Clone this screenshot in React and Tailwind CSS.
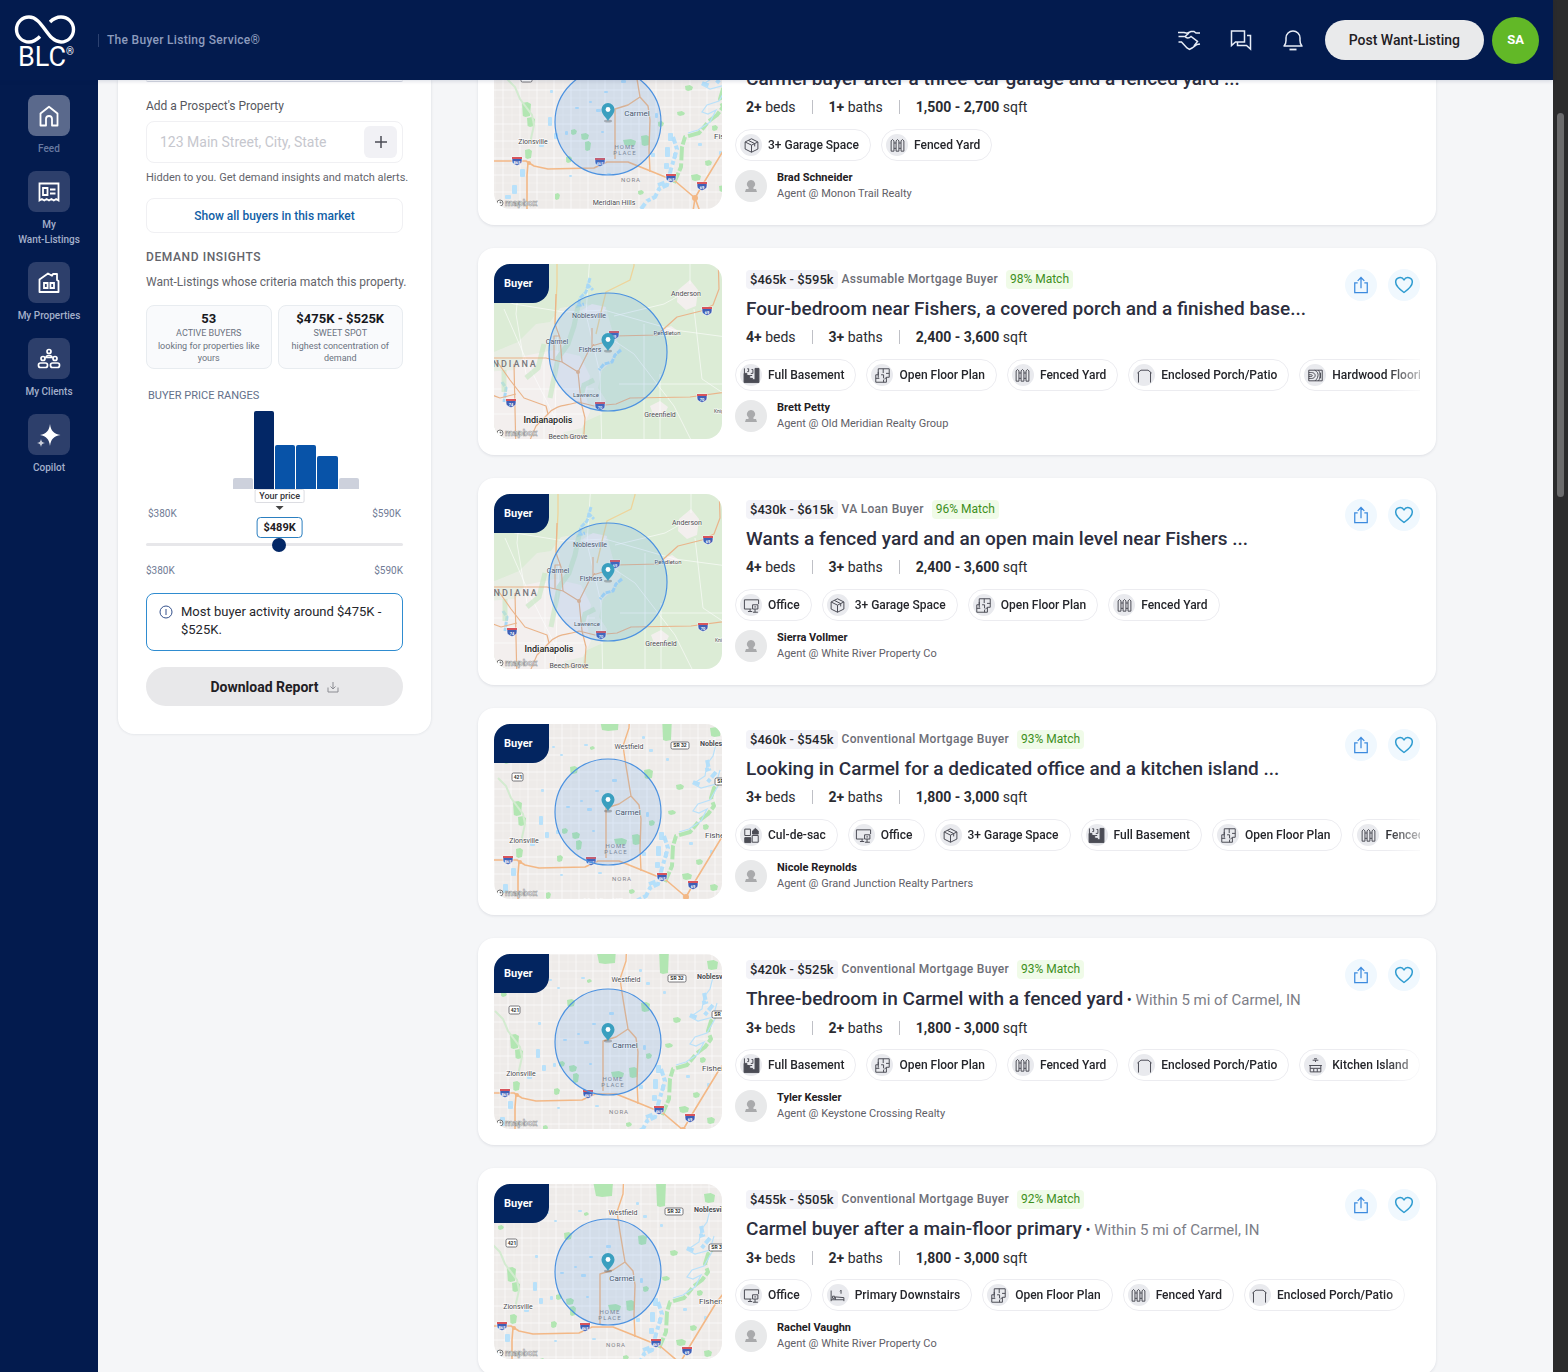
import { useState } from "react";

const listings = [
  {
    title: "Carmel buyer after a three-car garage and a fenced yard ...",
    price: "$400k - $495k",
    type: "Conventional Mortgage Buyer",
    match: "99% Match",
    beds: "2+",
    baths: "1+",
    sqft: "1,500 - 2,700",
    features: ["3+ Garage Space", "Fenced Yard"],
    agent: "Brad Schneider",
    company: "Monon Trail Realty",
    map: "carmel",
    shift: [9, -9],
  },
  {
    title: "Four-bedroom near Fishers, a covered porch and a finished base...",
    price: "$465k - $595k",
    type: "Assumable Mortgage Buyer",
    match: "98% Match",
    beds: "4+",
    baths: "3+",
    sqft: "2,400 - 3,600",
    features: ["Full Basement", "Open Floor Plan", "Fenced Yard", "Enclosed Porch/Patio", "Hardwood Flooring"],
    agent: "Brett Petty",
    company: "Old Meridian Realty Group",
    map: "fishers",
    shift: [0, 0],
  },
  {
    title: "Wants a fenced yard and an open main level near Fishers ...",
    price: "$430k - $615k",
    type: "VA Loan Buyer",
    match: "96% Match",
    beds: "4+",
    baths: "3+",
    sqft: "2,400 - 3,600",
    features: ["Office", "3+ Garage Space", "Open Floor Plan", "Fenced Yard"],
    agent: "Sierra Vollmer",
    company: "White River Property Co",
    map: "fishers",
    shift: [1, -1],
  },
  {
    title: "Looking in Carmel for a dedicated office and a kitchen island ...",
    price: "$460k - $545k",
    type: "Conventional Mortgage Buyer",
    match: "93% Match",
    beds: "3+",
    baths: "2+",
    sqft: "1,800 - 3,000",
    features: ["Cul-de-sac", "Office", "3+ Garage Space", "Full Basement", "Open Floor Plan", "Fenced Yard"],
    agent: "Nicole Reynolds",
    company: "Grand Junction Realty Partners",
    map: "carmel",
    shift: [0, 0],
  },
  {
    title: "Three-bedroom in Carmel with a fenced yard",
    area: "Within 5 mi of Carmel, IN",
    price: "$420k - $525k",
    type: "Conventional Mortgage Buyer",
    match: "93% Match",
    beds: "3+",
    baths: "2+",
    sqft: "1,800 - 3,000",
    features: ["Full Basement", "Open Floor Plan", "Fenced Yard", "Enclosed Porch/Patio", "Kitchen Island"],
    agent: "Tyler Kessler",
    company: "Keystone Crossing Realty",
    map: "carmel",
    shift: [-3, 3],
  },
  {
    title: "Carmel buyer after a main-floor primary",
    area: "Within 5 mi of Carmel, IN",
    price: "$455k - $505k",
    type: "Conventional Mortgage Buyer",
    match: "92% Match",
    beds: "3+",
    baths: "2+",
    sqft: "1,800 - 3,000",
    features: ["Office", "Primary Downstairs", "Open Floor Plan", "Fenced Yard", "Enclosed Porch/Patio"],
    agent: "Rachel Vaughn",
    company: "White River Property Co",
    map: "carmel",
    shift: [-6, 6],
  },
];

const priceBars = [
  { h: 0 }, { h: 0 }, { h: 0 }, { h: 0 },
  { h: 11, color: "bg-[#cdd1dc]" },
  { h: 78, color: "bg-[#032766]" },
  { h: 44, color: "bg-[#0853a8]" },
  { h: 44, color: "bg-[#0853a8]" },
  { h: 33, color: "bg-[#0853a8]" },
  { h: 11, color: "bg-[#cdd1dc]" },
  { h: 0 }, { h: 0 },
];

/* ---------- icons ---------- */

function Stroke({ size = 22, width = 1.5, children }) {
  return (
    <svg width={size} height={size} viewBox="0 0 24 24" fill="none" stroke="currentColor" strokeWidth={width} aria-hidden="true">
      {children}
    </svg>
  );
}

const HomeIcon = () => (
  <Stroke size={24} width={1.8}>
    <path d="M3.500 21.500V9.500L12 2.800l8.500 6.700v12H15v-6.500a3 3 0 0 0-6 0v6.500z" strokeLinejoin="round" />
  </Stroke>
);

const WantListIcon = () => (
  <Stroke size={24} width={1.8}>
    <path d="M2.500 3.500h19v17l-2.400-1.500-2.300 1.500-2.400-1.500-2.400 1.500-2.400-1.500-2.300 1.500-2.400-1.500-2.400 1.500z" />
    <path d="M6 8h4.500v7H6zM13 9.500h5.500M13 13.500h5.500" />
  </Stroke>
);

const PropertiesIcon = () => (
  <Stroke size={24} width={1.8}>
    <path d="M2.500 21V8.500L11 2.500l4 2.200 1-1.700h4V9l1.500 1v11z" strokeLinejoin="round" />
    <path d="M7 12h3.600v5H7zM13.400 12H17v5h-3.600z" />
  </Stroke>
);

const ClientsIcon = () => (
  <Stroke size={24} width={1.7}>
    <circle cx="12" cy="4.500" r="2" />
    <circle cx="6" cy="11.500" r="2" />
    <circle cx="18" cy="11.500" r="2" />
    <path d="M9 10.500c0-1.200 1.200-2 3-2s3 .8 3 2z" />
    <rect x="1.500" y="16" width="9" height="4.500" rx="2" />
    <rect x="13.500" y="16" width="9" height="4.500" rx="2" />
  </Stroke>
);

const CopilotIcon = () => (
  <svg width="24" height="24" viewBox="0 0 24 24" fill="currentColor" aria-hidden="true">
    <path d="M13 1c1 7 3.500 9.500 10.500 11C16.500 13.500 14 16 13 23c-1-7-3.500-9.500-10-11C9.500 10.500 12 8 13 1z" />
    <path d="M4 16c.4 2.400 1.200 3.400 4 4-2.800.6-3.600 1.600-4 4-.4-2.400-1.200-3.400-4-4 2.800-.6 3.600-1.600 4-4z" opacity=".75" />
  </svg>
);

const HandshakeIcon = () => (
  <Stroke size={24} width={1.5}>
    <path d="M1 4.500h6l3 .8 4-1.800h3l2 1.500h4" />
    <path d="M1.500 14h3l5.500 6 2.500 1.500L15 20l5-3.500 3-.5" />
    <path d="M1.500 8.500H8L12 5M8 8.500c1.500 2 4 1.800 6 0l6.500 5-3.500 4.500" />
  </Stroke>
);

const ChatsIcon = () => (
  <Stroke size={24} width={1.5}>
    <path d="M2.500 3h13v11H6.500l-4 3.500z" />
    <path d="M18 7.500h3.500v13.500l-4-3.500h-9V14" />
  </Stroke>
);

const BellIcon = () => (
  <Stroke size={24} width={1.5}>
    <path d="M3 18c1.600-1.300 2-3 2-5.500V10a7 7 0 0 1 14 0v2.500c0 2.500.4 4.200 2 5.500z" strokeLinejoin="round" />
    <path d="M8.500 21.500h7" strokeWidth="1.800" />
  </Stroke>
);

const ShareIcon = () => (
  <Stroke size={20} width={1.5}>
    <path d="M8 9.500H4.500V21h15V9.500H16M12 16V3M8 7l4-4 4 4" />
  </Stroke>
);

const HeartIcon = () => (
  <Stroke size={20} width={1.8}>
    <path d="M12 21C7 17.500 2 13.500 2 8.500A5.300 5.300 0 0 1 12 6a5.300 5.300 0 0 1 10 2.500c0 5-5 9-10 12.500z" strokeLinejoin="round" />
  </Stroke>
);

const featureIcons = {
  "3+ Garage Space": (
    <path d="M12 2.500l9 4.500v10l-9 4.500L3 17V7zM3 7l9 4.500L21 7M12 11.500v10M7.500 4.800l9 4.500v4" />
  ),
  "Fenced Yard": (
    <path d="M3 5.500L5 3.500l2 2V20H3zM10 5.500l2-2 2 2V20h-4zM17 5.500l2-2 2 2V20h-4zM7 8.500h3M7 16h3M14 8.500h3M14 16h3" />
  ),
  "Full Basement": (
    <g>
      <path d="M1.500 9h4v3h4v4h4v2h3.500V2h5.500v20h-21z" fill="currentColor" />
      <path d="M2 9V2M6 2.500h2v4H6M12 3.500h2V9h-3M10 12h3" />
    </g>
  ),
  "Open Floor Plan": (
    <path d="M6 2.500h15.500v12h-4v7H2.500V11H6zM6 7v8M2.500 16h5M13 2.500v6M10 11h3.500v5M17 9h4.500M13.500 21.500V18M17.500 14.500l-3 3" />
  ),
  "Enclosed Porch/Patio": <path d="M3.500 22V7.500M20.500 22V7.500M2 8.500l5-4h10l5 4" />,
  "Hardwood Flooring": (
    <path d="M2.500 4.500h19v15h-19zM2.500 8c6-1 9 1 9 4s-3 5-9 4M2.500 11c3-.4 5 0 5 1.200s-2 1.500-5 1.200M11 4.500c4 2 5 5 4.500 8s-2 5-4 7M16 4.500c3 3 3.500 11 0 15M19 8v8" />
  ),
  Office: (
    <path d="M12 17H2V4h20v6M7 20.500h6M10 17v3.500M13.500 11h7.500v6h-7.500zM17 17v4.500M14 21.500h7M16 14h2.500" />
  ),
  "Cul-de-sac": (
    <g>
      <path d="M2.500 3h8v9h-8zM13 12h8.500v9.500H13z" />
      <path d="M13.500 5.500l4-3.500 4 3.500V10h-8zM2.500 15h8.500v7H2.500z" fill="currentColor" />
    </g>
  ),
  "Kitchen Island": (
    <path d="M3 12h18M4.500 12v9h15v-9M9.500 21v-5h5v5M4.500 16h5M14.500 16h5M8 4.500h8M10 2.500h4M12 4.500V7" />
  ),
  "Primary Downstairs": (
    <path d="M3 5v15M3 18h18M21 20v-5l-12-1v4M5 13h3v3H5zM17 4.500v5M15.500 6L17 4.500" />
  ),
};

/* ---------- maps ---------- */

function Shield({ x, y, label }) {
  return (
    <g transform={`translate(${x} ${y})`}>
      <path d="M-5-4h10v4c0 2.500-2 3.500-5 4.500C-3 3.500-5 2.500-5 0z" fill="#3f5fb5" stroke="#fff" strokeWidth=".6" />
      <path d="M-5-4h10v2H-5z" fill="#d8545c" />
      <text y="2.500" fontSize="4" fill="#fff" textAnchor="middle" fontWeight="700">{label}</text>
    </g>
  );
}

const parks = [
  [105, -10, 20, 16], [168, -10, 10, 26], [216, 3, 11, 9], [76, 42, 8, 7], [150, 45, 9, 9],
  [19, 77, 9, 14], [24, 92, 8, 9], [22, 124, 7, 9], [63, 131, 6, 6], [68, 104, 6, 5],
  [78, 108, 8, 6], [82, 116, 6, 9], [120, 114, 13, 6], [138, 110, 9, 10], [155, 96, 6, 5],
  [188, 149, 10, 6], [182, 60, 8, 5], [174, 86, 8, 4], [202, 135, 7, 5], [209, 100, 6, 5],
  [96, 22, 5, 3], [10, 35, 6, 4], [216, 160, 8, 6], [52, 168, 5, 6], [135, 165, 6, 4],
];

const ponds = [
  [45, 92, 4, 9], [58, 22, 3, 2], [90, 20, 4, 2], [66, 30, 3, 2], [118, 55, 5, 3], [101, 66, 4, 2],
  [72, 82, 4, 2], [93, 84, 5, 3], [86, 76, 3, 2], [51, 108, 4, 6], [62, 106, 3, 4], [98, 106, 3, 2],
  [155, 25, 4, 3], [148, 12, 3, 3], [172, 34, 3, 3], [152, 88, 3, 5], [165, 108, 5, 8], [162, 122, 5, 10],
  [170, 128, 4, 5], [161, 138, 5, 6], [17, 144, 5, 8], [9, 160, 5, 9], [2, 170, 6, 4], [36, 119, 5, 3],
  [104, 148, 4, 2], [66, 150, 3, 2], [148, 128, 4, 4], [195, 118, 4, 3], [216, 126, 3, 4], [47, 65, 3, 3],
];

function CarmelMap() {
  const lines = [];
  for (let i = -1; i < 15; i++) lines.push(i * 17);
  return (
    <g>
      <rect x="-20" y="-20" width="270" height="220" fill="#eeebe9" />
      <g stroke="#fff" strokeWidth=".5" opacity=".5">
        {lines.map((n) => (
          <path key={n} d={`M${n + 9}-20V200M-20 ${n + 5}H250`} />
        ))}
      </g>
      <g stroke="#fff" strokeWidth=".8" opacity=".8">
        {lines.map((n) => (
          <path key={n} d={`M${n}-20V200M-20 ${n - 3}H250`} />
        ))}
      </g>
      <g fill="#b2e6b2">
        {parks.map(([x, y, w, h]) => (
          <path key={`${x}-${y}`} d={`M${x} ${y + 1}l${w * 0.6}-1 ${w * 0.4} 2-1 ${h - 2}-${w * 0.5} 1-${w * 0.3}-1z`} />
        ))}
      </g>
      <g fill="#b9e1fa">
        {ponds.map(([x, y, w, h]) => (
          <rect key={`${x}-${y}`} x={x} y={y} width={w} height={h} rx="1" />
        ))}
      </g>
      <path d="M4 54l8 8 5 12 12 16 2 10-4 18" fill="none" stroke="#d3ebd0" strokeWidth="2" />
      <path d="M228 55l-8 9-3 10 3 8-6 8-8 6-10 12-14 4-3 10-1 20-7 16" fill="none" stroke="#b2e6b2" strokeWidth="4" strokeDasharray="8 2 14 3" strokeLinejoin="round" />
      <path d="M222 20l-3 12-6 8-2 12-12 8 8 4 15-4 4-14M224 62l-8 14-12 4-5 7 6 2 8-4-6 12-12 8-10 3" fill="none" stroke="#b9e1fa" strokeWidth="1.200" />
      <path d="M213 36l2 9-6 2M222 48l-10 12M199 58l8 3M170 112l4 12-6 20-4 16-8 4-4 8-8 4-6 8M155 160l8-3" fill="none" stroke="#b4dffa" strokeWidth="4" strokeDasharray="7 2 4 3" />
      <g fill="none" stroke="#f3b886" strokeWidth="1.400" strokeLinejoin="round">
        <path d="M136-20L135 4l-6 18 3 20 5 30-12 8-13 4v50M137 72l8 9 2 14-1 30 1 22" />
        <path d="M-20 136h43l8 5 14 3 46-1 13-6h21l25 10 22 9 20 17 8 22M25 138l-1 12v50M250 85l-22 28-28 46-8 14-4 27" strokeWidth="1.600" />
      </g>
      <circle cx="192" cy="173" r="3" fill="#f3b886" />
      <circle cx="26" cy="138" r="2" fill="#f3b886" />
      <g fontSize="7" fill="#4a4a4e" stroke="#fff" strokeWidth="1.200" paintOrder="stroke" textAnchor="middle">
        <text x="135" y="25">Westfield</text>
        <text x="206" y="22" textAnchor="start" fontWeight="700">Noblesville</text>
        <text x="134" y="91" fontSize="8">Carmel</text>
        <text x="211" y="114" fontSize="8" textAnchor="start">Fishers</text>
        <text x="30" y="119">Zionsville</text>
        <text x="111" y="180">Meridian Hills</text>
      </g>
      <g fontSize="6" fill="#85858c" textAnchor="middle" letterSpacing="1">
        <text x="122" y="124">HOME</text>
        <text x="122" y="130">PLACE</text>
        <text x="128" y="157">NORA</text>
      </g>
      <g fill="#fff" stroke="#55555a" strokeWidth=".8">
        <rect x="177" y="18" width="18" height="7" rx="1.500" />
        <rect x="18" y="49" width="11" height="8" rx="1.500" />
        <rect x="221" y="54" width="18" height="7" rx="1.500" />
      </g>
      <g fontSize="5" fontWeight="700" fill="#333" textAnchor="middle">
        <text x="186" y="23">SR 32</text>
        <text x="24" y="55">421</text>
        <text x="230" y="59">SR 37</text>
      </g>
      <Shield x={14} y={136} label="865" />
      <Shield x={97} y={137} label="465" />
      <Shield x={168} y={153} label="465" />
      <Shield x={199} y={161} label="69" />
    </g>
  );
}

function FishersMap() {
  return (
    <g>
      <rect x="-10" y="-10" width="250" height="200" fill="#dcecd6" />
      <g fill="#f3efee">
        <path d="M-10 92l34-14 18-18 14-2 10-14 24-4 22 4 6 22 8 16-6 14-12 10-4 18 8 12-4 14-18 8-4 22H-10z" opacity=".55" />
        <path d="M-10 108l30-2 10-14 30-6 26 6 10 20-4 20 4 16-8 16-18 4-8 12H-10z" />
        <path d="M184 26l12-10 8 10-2 16-10 4-9-8zM156 142l10-5 8 6-4 8-11-1zM88 46l10-6 14 3-3 9-14 4zM168 66l9-4 7 5-6 5z" />
      </g>
      <g fill="none" stroke="#fff" strokeWidth="1" opacity=".6">
        <path d="M-10 30l30 10 50 8 40-2 70 20 60 8M28-10l-6 60 10 60M96-10l-4 60 14 60 2 80M150 60v130M196-10v30M200 45l8 70 30 20M120 52l50-12 18-10M110 70l30 20 40 52 20 40M125 120h105M10 45l24 55 30 60M50 90v90M-10 125h110M-10 150h100M166 110v80M64 60l-4 120" />
      </g>
      <path d="M96 14l-4 14-6 6-2 8 6-2M93 20l6 6M8 118l4 6-2 14M127 86l-6 5-3 7-8 2-5 6" fill="none" stroke="#a8d8f5" strokeWidth="3" strokeDasharray="5 1" />
      <path d="M84 42l-4 20-6 18-10 14-8 40M100 116l-10 5-3 12M50 80l-6 24-12 10M10 106v22" fill="none" stroke="#c4e6c2" strokeWidth="5" opacity=".6" />
      <g fill="none" stroke="#eed49a" strokeWidth="1.300">
        <path d="M140-10v12l-4 14-12 6-12 6-4 16-6 26" />
        <path d="M63-10v30l-2 40" />
      </g>
      <g fill="none" stroke="#eab48a" strokeWidth="1.200" strokeLinejoin="round">
        <path d="M62 30l-1 30 5 14 2 24M66 72h-6v24M98 64v18M98 82l13-4 10-6 42-1 20-18 24-6 12-6 6-16-1-35" />
        <path d="M-10 94h62l16 4 16 10 10-20 6-8M84 108l3 30 4 16-2 30M-10 128l16 6 16-4M2 96l14 20 14 18 22 8 2 8-12 12-6 14" />
        <path d="M20 100l2 90M54 150c8-10 20-8 30-12l16 4 22-2 14-6 60-1 44-6M60 190c4-14 14-18 24-18s10 10 12 18" />
      </g>
      <circle cx="84" cy="108" r="2" fill="#eab48a" />
      <g fontSize="7" fill="#4a4a4e" stroke="#fff" strokeWidth="1" strokeOpacity=".8" paintOrder="stroke" textAnchor="middle">
        <text x="192" y="32">Anderson</text>
        <text x="95" y="54">Noblesville</text>
        <text x="63" y="80">Carmel</text>
        <text x="96" y="88">Fishers</text>
        <text x="173" y="71" fontSize="6">Pendleton</text>
        <text x="92" y="133" fontSize="6">Lawrence</text>
        <text x="166" y="153">Greenfield</text>
        <text x="220" y="149" fontSize="5" textAnchor="start">Knightstown</text>
        <text x="54" y="159" fontSize="9" fontWeight="500" fill="#222">Indianapolis</text>
        <text x="74" y="175">Beech Grove</text>
      </g>
      <text x="-6" y="103" fontSize="9" fontWeight="500" fill="#77777c" letterSpacing="2">INDIANA</text>
      <Shield x={17} y={139} label="74" />
      <Shield x={106} y={142} label="70" />
      <Shield x={120} y={71} label="69" />
      <Shield x={208} y={134} label="70" />
      <Shield x={213} y={47} label="69" />
    </g>
  );
}

function ListingMap({ area, shift }) {
  return (
    <div className="relative h-[175px] w-[228px] shrink-0 overflow-hidden rounded-2xl">
      <svg className="block h-full w-full" viewBox="0 0 228 175" role="img" aria-label="Search area map">
        <g transform={`translate(${shift[0]} ${shift[1]})`}>
          {area === "carmel" ? <CarmelMap /> : <FishersMap />}
        </g>
        <circle cx="114" cy="88" r={area === "carmel" ? 53 : 59} fill="#4a98ee" fillOpacity=".16" stroke="#4c92e0" strokeWidth="1.200" />
        <ellipse cx="114" cy="87" rx="4" ry="1.500" fill="#333" opacity=".3" />
        <path d="M114 87c-2-4-6.500-6.500-6.500-11.500a6.500 6.500 0 0 1 13 0c0 5-4.500 7.500-6.500 11.500z" fill="#3a9fbf" />
        <circle cx="114" cy="75.500" r="2.400" fill="#fff" />
        <circle cx="6" cy="169" r="3" fill="#fff" stroke="#777" strokeWidth="1" />
        <circle cx="6.500" cy="168.500" r="1" fill="#777" />
        <text x="11" y="172" fontSize="9" fontWeight="700" fill="#fff" stroke="#999" strokeWidth=".6">mapbox</text>
      </svg>
      <span className="absolute left-0 top-0 rounded-br-2xl bg-[#032560] py-[10px] pl-[10px] pr-4 text-[11px] font-bold leading-[19px] text-white">
        Buyer
      </span>
    </div>
  );
}

/* ---------- feed ---------- */

function FeatureChip({ name }) {
  return (
    <li className="flex h-8 shrink-0 items-center gap-[6px] rounded-full border border-[#ececf0] pl-1 pr-[11px] text-xs font-medium text-[#25262b]">
      <span className="flex h-[22px] w-[22px] items-center justify-center rounded-full bg-[#e9eaee] text-[#4b4c55]">
        <Stroke size={17} width={1.4}>{featureIcons[name]}</Stroke>
      </span>
      {name}
    </li>
  );
}

function ListingCard({ listing }) {
  const [liked, setLiked] = useState(false);

  return (
    <article className="flex gap-[13px] rounded-2xl bg-white p-4 shadow-[0_1px_3px_rgba(20,30,60,0.1)]">
      <ListingMap area={listing.map} shift={listing.shift} />

      <div className="flex min-w-0 flex-1 flex-col">
        <div className="flex h-[87px] justify-between pl-[11px]">
          <div className="min-w-0">
            <div className="flex items-center pt-[6px] text-xs leading-[19px]">
              <span className="rounded bg-[#f3f3f8] px-1 text-[13px] font-medium text-[#25262b]">{listing.price}</span>
              <span className="ml-1 font-medium tracking-wide text-[#6d6e76]">{listing.type}</span>
              <span className="ml-2 rounded bg-[#f0fbe8] px-1 text-[#3d8f1c]">{listing.match}</span>
            </div>
            <h2 className="mt-[7px] truncate text-[19px] font-medium leading-[26px] text-[#2c2e3e]">
              {listing.title}
              {listing.area && (
                <span className="text-[15px] font-normal text-[#7d7e87]">
                  <span className="text-[#2c2e3e]"> • </span>
                  {listing.area}
                </span>
              )}
            </h2>
            <div className="mt-[6px] flex items-center gap-4 text-sm leading-[18px] text-[#2b2c31]">
              <span><b>{listing.beds}</b> beds</span>
              <i className="h-[14px] w-px bg-[#bfc0c6]"></i>
              <span><b>{listing.baths}</b> baths</span>
              <i className="h-[14px] w-px bg-[#bfc0c6]"></i>
              <span><b>{listing.sqft}</b> sqft</span>
            </div>
          </div>

          <div className="flex gap-[11px] pt-[5px]">
            <button aria-label="Share" className="flex h-8 w-8 items-center justify-center rounded-full bg-[#f0f8fe] text-[#3b8ade]">
              <ShareIcon />
            </button>
            <button
              aria-label="Save"
              aria-pressed={liked}
              onClick={() => setLiked(!liked)}
              className="flex h-8 w-8 items-center justify-center rounded-full bg-[#f0f8fe] text-[#2e9bd0]"
            >
              <HeartIcon />
            </button>
          </div>
        </div>

        <ul className="mt-2 flex gap-[10px] overflow-hidden [mask-image:linear-gradient(to_right,black_95%,rgba(0,0,0,0.3))]">
          {listing.features.map((name) => (
            <FeatureChip key={name} name={name} />
          ))}
        </ul>

        <div className="mt-[9px] flex items-center gap-[10px]">
          <span className="flex h-8 w-8 items-center justify-center rounded-full bg-[#e8e9ea] text-[#a9aaac]">
            <svg width="14" height="14" viewBox="0 0 14 14" fill="currentColor" aria-hidden="true">
              <path d="M7 1a4 4 0 0 1 2.500 7.200V10H12l1 3H1l1-3h2.500V8.200A4 4 0 0 1 7 1z" />
            </svg>
          </span>
          <div className="text-[11px] leading-4">
            <p className="font-bold text-[#1f2024]">{listing.agent}</p>
            <p className="text-[#5f6067]">Agent @ {listing.company}</p>
          </div>
        </div>
      </div>
    </article>
  );
}

/* ---------- left side ---------- */

function NavItem({ icon, label, active }) {
  return (
    <a href="#" className="flex w-full flex-col items-center gap-[5px] text-center text-[10px] font-medium leading-[15px]">
      <span className={`flex h-[41px] w-[42px] items-center justify-center rounded-lg text-white ${active ? "bg-[#5a698c]" : "bg-[#2d3f6b]"}`}>
        {icon}
      </span>
      <span className={active ? "text-[#6779a0]" : "text-[#a3b0cb]"}>{label}</span>
    </a>
  );
}

function PropertyPanel() {
  const [price, setPrice] = useState(489);

  return (
    <section className="w-[313px] shrink-0 self-start rounded-b-2xl bg-white px-7 pb-7 shadow-[0_0_3px_rgba(20,30,60,0.12)]">
      <div className="h-[2px] rounded-b-lg border-b border-[#d5d8e2]"></div>

      <label htmlFor="address" className="mt-4 block text-xs leading-4 text-[#56575e]">Add a Prospect's Property</label>
      <div className="mt-[7px] flex h-[42px] items-center rounded-lg border border-[#f0f0f3] pl-[13px] pr-[5px]">
        <input
          id="address"
          placeholder="123 Main Street, City, State"
          className="min-w-0 flex-1 text-sm text-[#25262b] outline-none placeholder:text-[#c6c7ce]"
        />
        <button aria-label="Add property" className="flex h-8 w-[33px] items-center justify-center rounded-md bg-[#f1f1f5] text-[#4b4c55]">
          <svg width="12" height="12" viewBox="0 0 12 12" stroke="currentColor" strokeWidth="1.500" aria-hidden="true">
            <path d="M6 0v12M0 6h12" />
          </svg>
        </button>
      </div>
      <p className="mt-[7px] whitespace-nowrap text-[11px] leading-4 text-[#63646b]">Hidden to you. Get demand insights and match alerts.</p>
      <button className="mt-3 h-[35px] w-full rounded-lg border border-[#f0f0f3] text-xs font-medium text-[#1160a6]">
        Show all buyers in this market
      </button>

      <h3 className="mt-4 text-xs font-medium leading-4 tracking-wider text-[#63646b]">DEMAND INSIGHTS</h3>
      <p className="mt-[9px] whitespace-nowrap text-xs leading-4 text-[#63646b]">Want-Listings whose criteria match this property.</p>

      <div className="mt-[15px] grid grid-cols-2 gap-[6px] text-center text-[9px] leading-3 text-[#6b7280]">
        <div className="h-16 rounded-lg border border-[#e8ecf0] bg-[#f9fafc] px-2 pt-[6px]">
          <p className="text-[13px] font-bold leading-[14px] text-[#17181c]">53</p>
          <p className="leading-[14px]">ACTIVE BUYERS</p>
          <p>looking for properties like yours</p>
        </div>
        <div className="h-16 rounded-lg border border-[#e8ecf0] bg-[#f9fafc] px-2 pt-[6px]">
          <p className="text-[13px] font-bold leading-[14px] text-[#17181c]">$475K - $525K</p>
          <p className="leading-[14px]">SWEET SPOT</p>
          <p>highest concentration of demand</p>
        </div>
      </div>

      <h4 className="mt-[19px] pl-[2px] text-[11px] leading-4 text-[#63708a]">BUYER PRICE RANGES</h4>
      <div className="mt-[7px] flex h-[78px] items-end gap-px px-[2px]">
        {priceBars.map((bar, i) => (
          <div key={i} className={`flex-1 rounded-t-xs ${bar.color || ""}`} style={{ height: bar.h }}></div>
        ))}
      </div>
      <div className="relative flex h-[49px] items-center justify-between px-[2px] text-[10px] text-[#707b95]">
        <span>$380K</span>
        <span>$590K</span>
        <div className="absolute left-[52%] top-0 flex -translate-x-1/2 flex-col items-center">
          <span className="whitespace-nowrap rounded-xs border border-[#dcdde2] bg-white px-1 text-[9px] font-medium leading-3 text-[#33343a]">Your price</span>
          <i className="mt-[3px] border-x-4 border-t-4 border-x-transparent border-t-[#444]"></i>
          <output htmlFor="price" className="mt-[7px] rounded border border-[#2b7fc0] bg-white px-[6px] text-[11px] font-bold leading-[19px] text-[#1f2024]">${price}K</output>
        </div>
      </div>
      <input
        id="price"
        type="range"
        aria-label="Your price"
        min="380"
        max="590"
        value={price}
        onChange={(e) => setPrice(e.target.value)}
        className="block h-3 w-full appearance-none bg-transparent [&::-webkit-slider-runnable-track]:h-[3px] [&::-webkit-slider-runnable-track]:rounded-full [&::-webkit-slider-runnable-track]:bg-[#e7e7ea] [&::-webkit-slider-thumb]:-mt-[5px] [&::-webkit-slider-thumb]:h-[14px] [&::-webkit-slider-thumb]:w-[14px] [&::-webkit-slider-thumb]:appearance-none [&::-webkit-slider-thumb]:rounded-full [&::-webkit-slider-thumb]:bg-[#032766]"
      />
      <div className="mt-[13px] flex justify-between text-[10px] leading-4 text-[#707b95]">
        <span>$380K</span>
        <span>$590K</span>
      </div>

      <div className="mt-[14px] flex gap-2 rounded-lg border border-[#2f8cd0] px-3 pb-[11px] pt-[9px] text-[13px] leading-[18px] text-[#25262b]">
        <svg className="mt-[2px] shrink-0" width="14" height="14" viewBox="0 0 14 14" fill="none" stroke="#34518c" aria-hidden="true">
          <circle cx="7" cy="7" r="6" />
          <path d="M7 4v6" />
        </svg>
        <p>Most buyer activity around $475K - $525K.</p>
      </div>

      <button className="mt-4 flex h-[39px] w-full items-center justify-center gap-2 rounded-full bg-[#e8e8ea] text-sm font-bold text-[#1f2024]">
        Download Report
        <svg width="12" height="12" viewBox="0 0 12 12" fill="none" stroke="#8b8c92" aria-hidden="true">
          <path d="M1 6.500V11h10V6.500M6 1v7M3.500 5.500L6 8l2.500-2.500" />
        </svg>
      </button>
    </section>
  );
}

function Header() {
  return (
    <header className="z-10 flex h-20 shrink-0 items-center bg-[#031b4e] pr-[14px] shadow-[0_1px_4px_rgba(3,27,78,0.15)]">
      <a href="#" className="flex w-[98px] shrink-0 flex-col pl-[14px] pt-1 text-white">
        <svg width="62" height="29" viewBox="0 0 62 29" fill="none" stroke="currentColor" strokeWidth="3.400" aria-hidden="true">
          <path d="M26 21.500C22 25.500 19 27 15 27A12.500 12.500 0 0 1 15 2C29 2 33 27 47 27A12.500 12.500 0 0 0 47 2c-4 0-7.500 1.500-11 5" />
        </svg>
        <span className="flex pl-1 text-[27px] leading-[26px]">
          BLC
          <sup className="pt-2 text-[10px] leading-none">®</sup>
        </span>
      </a>
      <span className="border-l border-[#2c4170] pl-2 text-xs font-medium leading-[13px] tracking-wide text-[#8d9bbd]">The Buyer Listing Service®</span>

      <nav className="ml-auto flex items-center gap-7 text-[#e8edf7]">
        <button aria-label="Deals"><HandshakeIcon /></button>
        <button aria-label="Messages"><ChatsIcon /></button>
        <button aria-label="Notifications"><BellIcon /></button>
      </nav>
      <button className="ml-5 h-10 rounded-full bg-[#e9eaeb] px-6 text-sm font-medium text-[#1f2024]">Post Want-Listing</button>
      <button className="ml-2 h-[47px] w-[47px] rounded-full bg-[#62b827] text-[13px] font-bold text-white">SA</button>
    </header>
  );
}

function App() {
  return (
    <div className="flex h-screen overflow-hidden bg-[#f5f6f8] font-[Roboto,'Liberation_Sans',sans-serif]">
      <div className="flex min-w-0 flex-1 flex-col">
        <Header />

        <div className="flex min-h-0 flex-1">
          <nav className="flex w-[98px] shrink-0 flex-col gap-[15px] bg-[#031b4e] pt-[15px]">
            <NavItem icon={<HomeIcon />} label="Feed" active />
            <NavItem icon={<WantListIcon />} label={<>My<br />Want-Listings</>} />
            <NavItem icon={<PropertiesIcon />} label="My Properties" />
            <NavItem icon={<ClientsIcon />} label="My Clients" />
            <NavItem icon={<CopilotIcon />} label="Copilot" />
          </nav>

          <main className="flex min-w-0 flex-1 gap-[47px] overflow-hidden pl-5">
            <PropertyPanel />

            {/* feed is scrolled a little, so the first card sits partly under the header */}
            <div className="-mt-[62px] flex min-w-0 max-w-[958px] flex-1 flex-col gap-[23px]">
              {listings.map((listing) => (
                <ListingCard key={listing.title} listing={listing} />
              ))}
            </div>
          </main>
        </div>
      </div>

      {/* scrollbar */}
      <div className="w-[15px] shrink-0 bg-[#2b2b2c] px-[4px] pt-[113px]">
        <div className="h-[384px] rounded-full bg-[#6b6b6c]"></div>
      </div>
    </div>
  );
}

export default App;
